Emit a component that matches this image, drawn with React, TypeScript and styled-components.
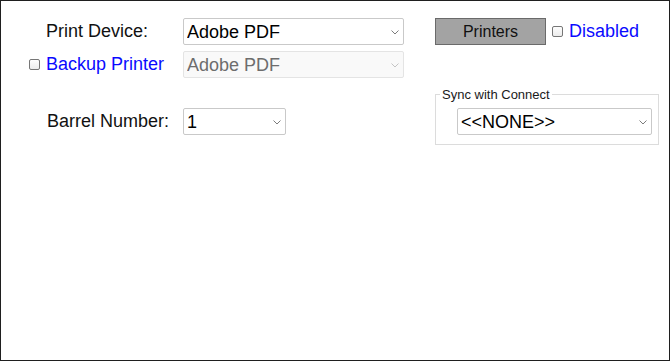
import styled, { createGlobalStyle } from "styled-components";

const GlobalStyle = createGlobalStyle`
  html, body {
    margin: 0;
    padding: 0;
    background: #fff;
  }
  body {
    font-family: "Liberation Sans", Arial, sans-serif;
  }
`;

const Frame = styled.div`
  box-sizing: border-box;
  width: 670px;
  height: 361px;
  border: 1px solid #1f1f1f;
  padding-top: 17px;
  display: flex;
  align-items: flex-start;
`;

const LeftColumn = styled.div`
  display: flex;
  flex-direction: column;
`;

const Row = styled.div<{ $mt?: number }>`
  display: flex;
  align-items: center;
  height: 27px;
  margin-top: ${(p) => p.$mt ?? 0}px;
`;

const LabelCell = styled.div<{ $pl: number }>`
  box-sizing: border-box;
  width: 182px;
  padding-left: ${(p) => p.$pl}px;
  font-size: 18px;
  color: #111;
  display: flex;
  align-items: center;
`;

const CheckLabel = styled.label<{ $gap: number }>`
  display: flex;
  align-items: center;
  gap: ${(p) => p.$gap}px;
  font-size: 18px;
  color: #0a0aff;
  cursor: pointer;
`;

const Check = styled.input.attrs({ type: "checkbox" })`
  appearance: none;
  box-sizing: border-box;
  width: 11px;
  height: 11px;
  margin: 0;
  border: 1px solid #767676;
  border-radius: 2px;
  background: linear-gradient(#fdfdfd, #ececec);
`;

const SelectWrap = styled.div<{ $w: number; $ml?: number }>`
  position: relative;
  width: ${(p) => p.$w}px;
  height: 27px;
  margin-left: ${(p) => p.$ml ?? 0}px;
`;

const Select = styled.select`
  appearance: none;
  box-sizing: border-box;
  width: 100%;
  height: 100%;
  margin: 0;
  padding: 0 20px 0 3px;
  border: 1px solid #c9c9c9;
  border-radius: 2px;
  background: #fff;
  color: #000;
  font-family: "Liberation Sans", Arial, sans-serif;
  font-size: 18px;
  outline: none;

  &:disabled {
    background: #f9f9f9;
    border-color: #e4e4e4;
    color: #6d6d6d;
    opacity: 1;
  }
`;

const Chevron = styled.svg<{ $muted?: boolean }>`
  position: absolute;
  right: 5px;
  top: 12px;
  width: 8px;
  height: 5px;
  pointer-events: none;
  stroke: ${(p) => (p.$muted ? "#c4c4c4" : "#7c7c7c")};
`;

const RightColumn = styled.div`
  margin-left: 31px;
  width: 224px;
  display: flex;
  flex-direction: column;
`;

const TopRow = styled.div`
  display: flex;
  align-items: center;
  height: 27px;
  gap: 6px;
`;

const Button = styled.button`
  box-sizing: border-box;
  width: 111px;
  height: 27px;
  margin: 0;
  padding: 0;
  background: #a3a3a3;
  border: 1px solid #6a6a6a;
  font-family: "Liberation Sans", Arial, sans-serif;
  font-size: 16px;
  color: #111;
`;

const Group = styled.fieldset`
  box-sizing: border-box;
  width: 224px;
  margin: 42px 0 0;
  padding: 6px 6px 9px 4px;
  border: 1px solid #dcdcdc;
`;

const Legend = styled.legend`
  padding: 0 2px;
  font-size: 13px;
  color: #1a1a1a;
`;

function Dropdown({
  w,
  ml,
  value,
  disabled,
}: {
  w: number;
  ml?: number;
  value: string;
  disabled?: boolean;
}) {
  return (
    <SelectWrap $w={w} $ml={ml}>
      <Select disabled={disabled} defaultValue={value}>
        <option>{value}</option>
      </Select>
      <Chevron $muted={disabled} viewBox="0 0 8 5" fill="none" strokeWidth="1">
        <path d="M0.5 0.5 L4 4 L7.5 0.5" />
      </Chevron>
    </SelectWrap>
  );
}

export default function App() {
  return (
    <>
      <GlobalStyle />
      <Frame>
        <LeftColumn>
          <Row>
            <LabelCell $pl={45}>Print Device:</LabelCell>
            <Dropdown w={221} value="Adobe PDF" />
          </Row>
          <Row $mt={6}>
            <LabelCell $pl={28}>
              <CheckLabel $gap={6}>
                <Check />
                Backup Printer
              </CheckLabel>
            </LabelCell>
            <Dropdown w={221} value="Adobe PDF" disabled />
          </Row>
          <Row $mt={30}>
            <LabelCell $pl={46}>Barrel Number:</LabelCell>
            <Dropdown w={103} value="1" />
          </Row>
        </LeftColumn>
        <RightColumn>
          <TopRow>
            <Button>Printers</Button>
            <CheckLabel $gap={6}>
              <Check />
              Disabled
            </CheckLabel>
          </TopRow>
          <Group>
            <Legend>Sync with Connect</Legend>
            <Dropdown w={195} ml={17} value="<<NONE>>" />
          </Group>
        </RightColumn>
      </Frame>
    </>
  );
}
